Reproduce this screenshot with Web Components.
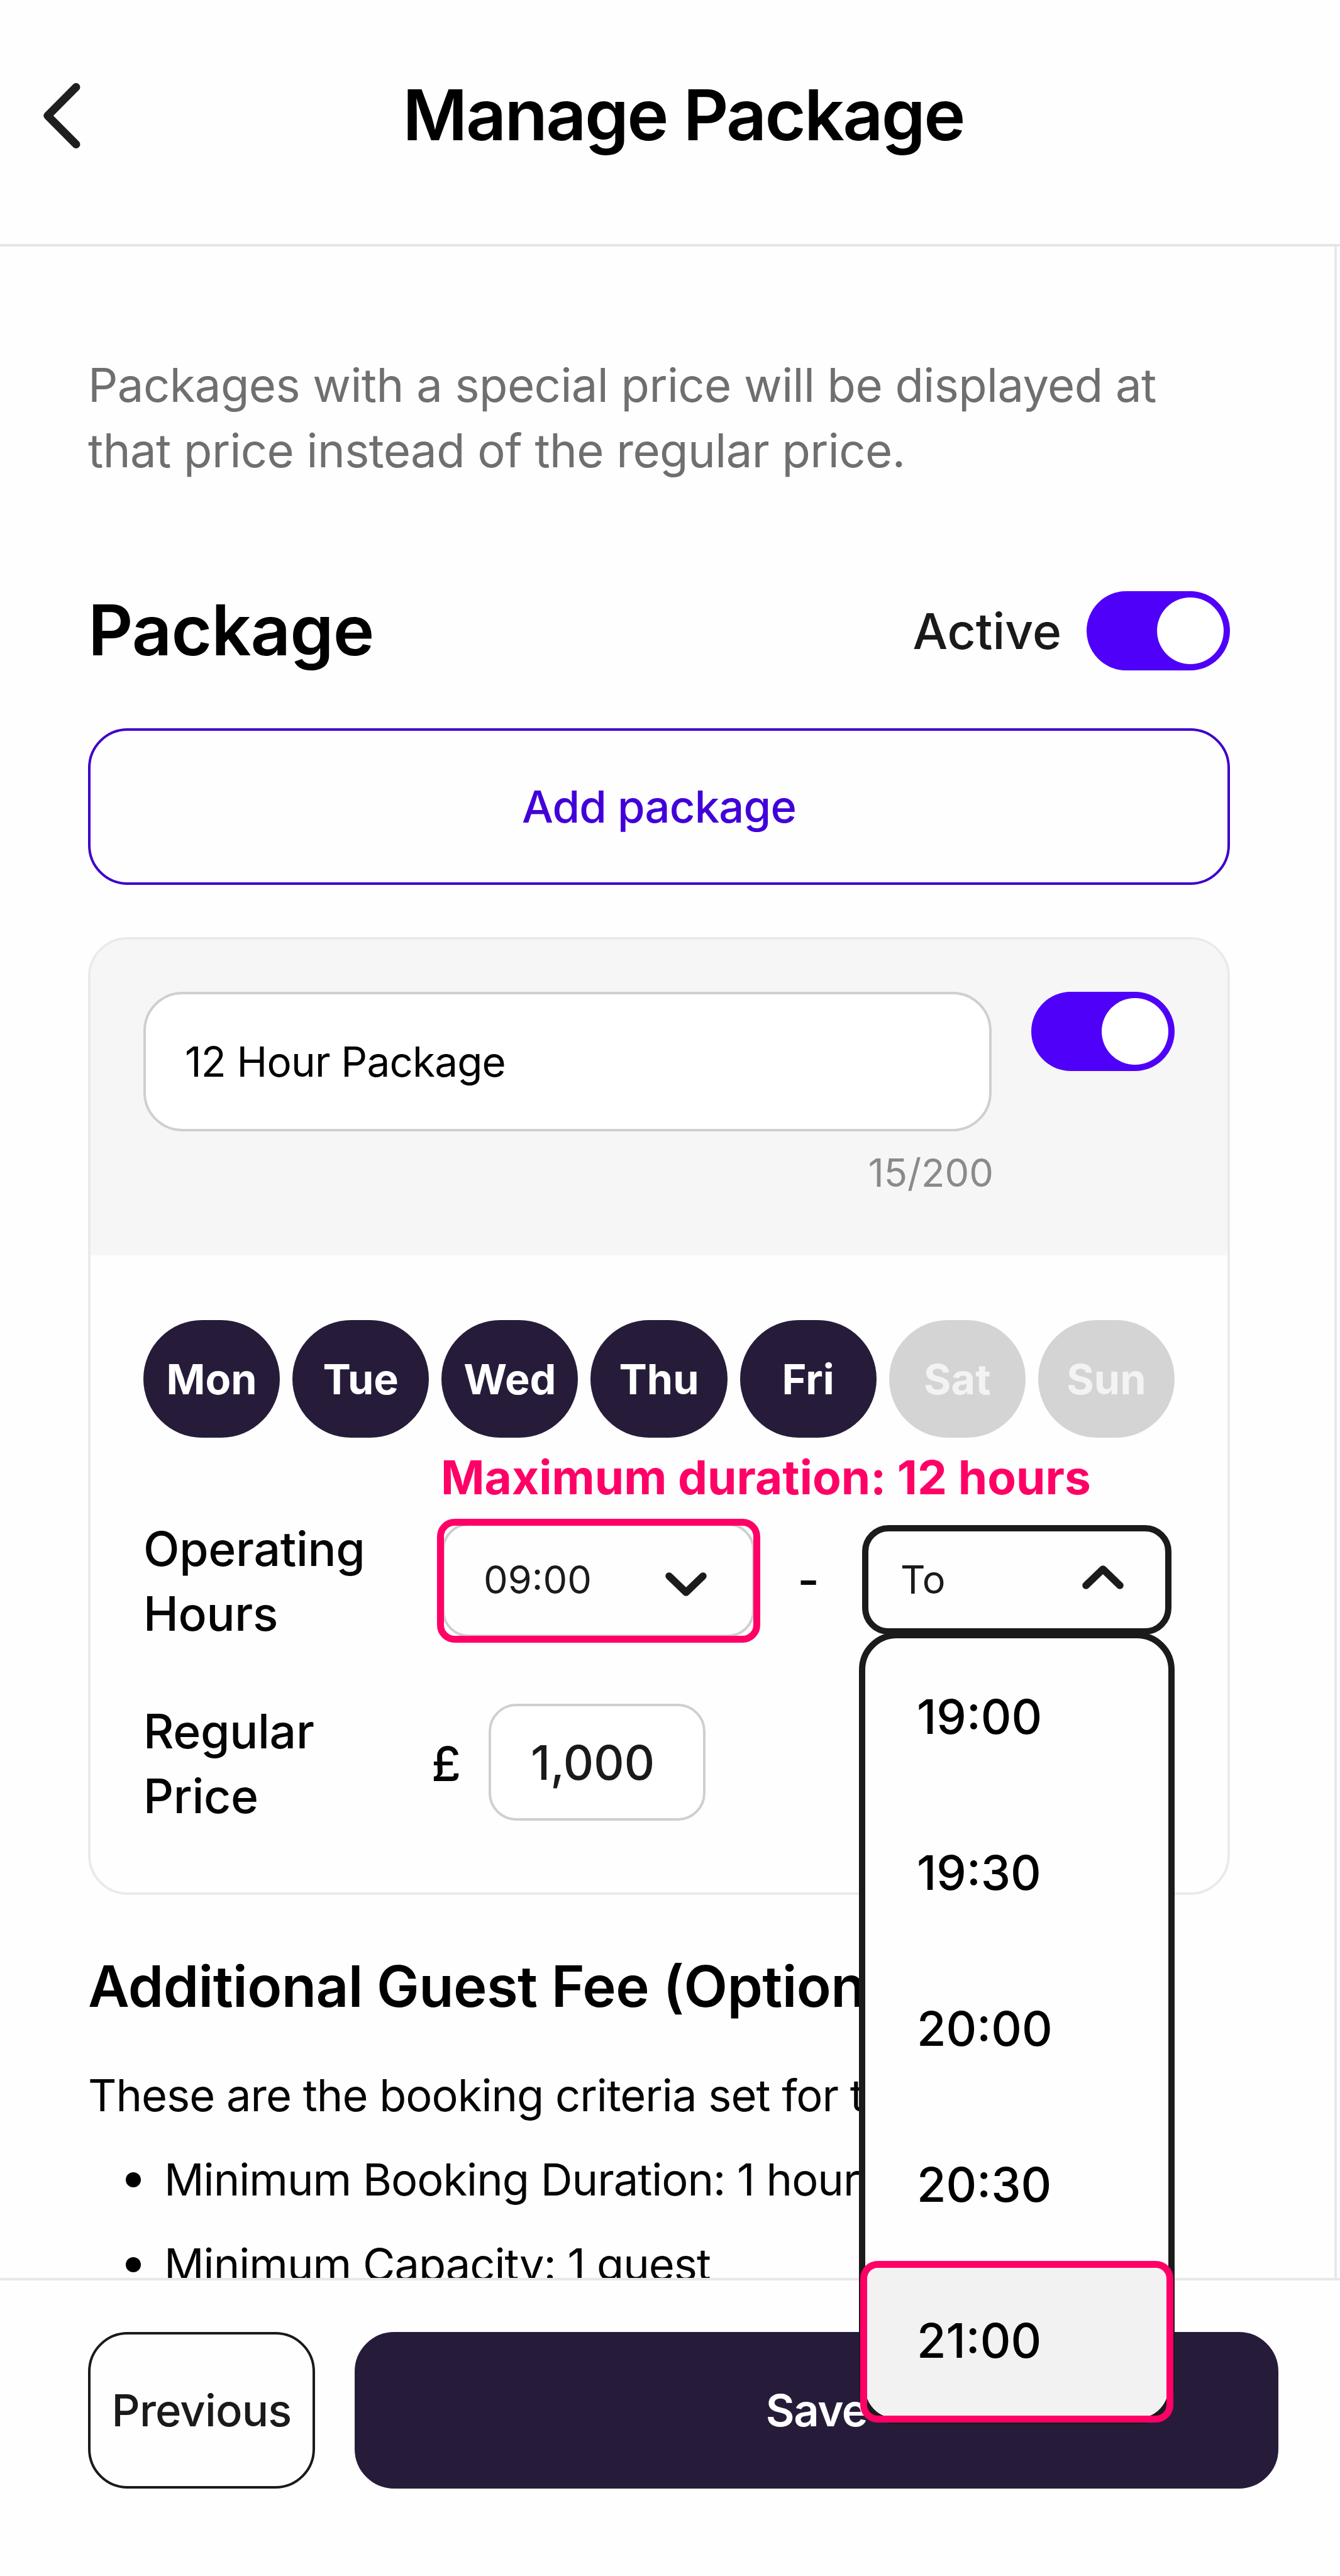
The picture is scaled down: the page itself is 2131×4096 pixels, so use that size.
<!DOCTYPE html>
<html lang="en">
<head>
<meta charset="utf-8">
<title>Manage Package</title>
<style>
  html, body {
    margin: 0;
    padding: 0;
    width: 2131px;
    height: 4096px;
    overflow: hidden;
    background: #fefefe;
    font-family: Inter, "Liberation Sans", sans-serif;
    color: #050505;
  }
</style>
</head>
<body>
<package-page></package-page>

<script>
class PageHeader extends HTMLElement {
  constructor() {
    super();
    this.attachShadow({ mode: "open" });
    this.shadowRoot.innerHTML = `
      <style>
        :host {
          display: flex;
          align-items: center;
          box-sizing: border-box;
          height: 392px;
          padding: 0 0 21px 64px;
          border-bottom: 4px solid #e5e5e5;
        }
        svg { flex: none; display: block; }
        h1 {
          flex: 1;
          margin: -4px 0 0;
          padding-right: 92px;
          text-align: center;
          font-size: 112px;
          line-height: 130px;
          font-weight: 600;
          letter-spacing: -2.7px;
          color: #000;
        }
      </style>
      <svg width="70" height="112" viewBox="0 0 70 112" fill="none" stroke="#1f1f1f" stroke-width="13" stroke-linecap="round" stroke-linejoin="round">
        <path d="M57 10.500 L11.800 56 L57 101.500"/>
      </svg>
      <h1><slot></slot></h1>
    `;
  }
}

class ToggleSwitch extends HTMLElement {
  constructor() {
    super();
    this.attachShadow({ mode: "open" });
    this.shadowRoot.innerHTML = `
      <style>
        :host {
          display: flex;
          justify-content: flex-end;
          flex: none;
          box-sizing: border-box;
          width: 228px;
          height: 126px;
          padding: 10px;
          border-radius: 63px;
          background: #4f00f8;
        }
        i {
          width: 106px;
          height: 106px;
          border-radius: 50%;
          background: #fff;
        }
      </style>
      <i></i>
    `;
  }
}

class AppButton extends HTMLElement {
  constructor() {
    super();
    this.attachShadow({ mode: "open" });
    this.shadowRoot.innerHTML = `
      <style>
        :host {
          display: flex;
          align-items: center;
          justify-content: center;
          box-sizing: border-box;
          height: 249px;
          border: 4px solid #1a1a1a;
          border-radius: 63px;
          font-size: 70.5px;
          font-weight: 500;
          letter-spacing: -0.8px;
          color: #1a1a1a;
          white-space: nowrap;
        }
        :host([variant="accent"]) {
          border-color: #3d00cc;
          color: #4200d9;
        }
        :host([variant="primary"]) {
          border-color: #261c3a;
          background: #261c3a;
          color: #fff;
          font-weight: 600;
          letter-spacing: -1.4px;
        }
      </style>
      <slot></slot>
    `;
  }
}

class TextField extends HTMLElement {
  constructor() {
    super();
    this.attachShadow({ mode: "open" });
    this.shadowRoot.innerHTML = `
      <style>
        :host {
          display: flex;
          align-items: center;
          box-sizing: border-box;
          border: 4px solid #cfcfcf;
          background: #fff;
        }
      </style>
      <slot></slot>
    `;
  }
}

class DayPill extends HTMLElement {
  constructor() {
    super();
    this.attachShadow({ mode: "open" });
    this.shadowRoot.innerHTML = `
      <style>
        :host {
          display: flex;
          align-items: center;
          justify-content: center;
          flex: 1;
          height: 187px;
          border-radius: 94px;
          background: #261c3a;
          color: #fff;
          font-size: 66.5px;
          font-weight: 700;
        }
        :host([off]) {
          background: #d4d4d4;
          color: #f3f3f3;
        }
      </style>
      <slot></slot>
    `;
  }
}

class FormRow extends HTMLElement {
  constructor() {
    super();
    this.attachShadow({ mode: "open" });
    this.shadowRoot.innerHTML = `
      <style>
        :host {
          display: flex;
          align-items: center;
          position: relative;
          height: 206px;
          font-size: 75px;
          line-height: 103px;
          font-weight: 500;
        }
        .label {
          flex: none;
          width: var(--label-width, 475px);
          letter-spacing: -0.3px;
        }
      </style>
      <div class="label"><slot name="label"></slot></div>
      <slot></slot>
    `;
  }
}

class TimeSelect extends HTMLElement {
  constructor() {
    super();
    this.attachShadow({ mode: "open" });
    this.shadowRoot.innerHTML = `
      <style>
        :host {
          display: flex;
          align-items: center;
          justify-content: space-between;
          position: relative;
          flex: none;
          box-sizing: border-box;
          width: 497px;
          height: 181px;
          margin-bottom: 3px;
          padding: 0 72px 0 62px;
          border: 4px solid #cfcfcf;
          border-radius: 42px;
          font-size: 61.4px;
          font-weight: 400;
          color: #1b1b1b;
        }
        :host([open]) {
          width: 492px;
          height: 174px;
          margin-bottom: 4px;
          border: 10px solid #1b1b1b;
          padding: 0 66px 0 51px;
        }
        svg { display: block; margin-top: 13px; }
        :host([open]) svg { transform: scaleY(-1); margin-top: -9px; }
      </style>
      <span>${this.getAttribute("value")}</span>
      <svg width="66" height="38" viewBox="0 0 66 38" fill="none" stroke="#1b1b1b" stroke-width="11.500" stroke-linecap="round" stroke-linejoin="round">
        <path d="M6 6 L33 32 L60 6"/>
      </svg>
      <slot></slot>
    `;
  }
}

class TimeMenu extends HTMLElement {
  constructor() {
    super();
    this.attachShadow({ mode: "open" });
    const items = this.getAttribute("times").split(",");
    this.shadowRoot.innerHTML = `
      <style>
        :host {
          position: absolute;
          z-index: 5;
          left: -15px;
          top: 160px;
          box-sizing: border-box;
          width: 502px;
          border: 10.500px solid #1b1b1b;
          border-radius: 60px;
          background: #fefefe;
          font-size: 75.5px;
          font-weight: 500;
          color: #000;
        }
        div {
          display: flex;
          align-items: center;
          position: relative;
          height: 248px;
          padding-left: 82px;
        }
        div:last-of-type {
          background: #f2f2f2;
          border-radius: 0 0 48px 48px;
        }
      </style>
      ${items.map((t, i) => `<div>${t}${i === items.length - 1 ? "<slot></slot>" : ""}</div>`).join("")}
    `;
  }
}

// Pink outline drawn over a control
class HighlightBox extends HTMLElement {
  constructor() {
    super();
    this.attachShadow({ mode: "open" });
    this.shadowRoot.innerHTML = `
      <style>
        :host {
          display: block;
          position: absolute;
          z-index: 6;
          box-sizing: border-box;
          border: 11px solid #ff0066;
          border-radius: 28px;
        }
      </style>
    `;
  }
}

class PackageCard extends HTMLElement {
  constructor() {
    super();
    this.attachShadow({ mode: "open" });
    this.shadowRoot.innerHTML = `
      <style>
        :host {
          display: block;
          box-sizing: border-box;
          height: 1523px;
          border: 4px solid #eaeaea;
          border-radius: 63px;
        }
        .top {
          display: flex;
          justify-content: space-between;
          align-items: flex-start;
          box-sizing: border-box;
          height: 502px;
          padding: 83px 84px 0;
          border-radius: 58px 58px 0 0;
          background: #f6f6f6;
        }
        .name {
          width: 1349px;
        }
        .name text-field {
          height: 222px;
          padding-left: 62px;
          border-radius: 62px;
          font-size: 65.5px;
          letter-spacing: -0.8px;
          color: #000;
        }
        .count {
          margin: 23px -3px 0 0;
          text-align: right;
          font-size: 61.4px;
          line-height: 86px;
          color: #8a8a8a;
        }
        .body {
          padding: 103px 84px 0;
        }
        .days {
          display: flex;
          gap: 20px;
          margin-bottom: 125px;
        }
        .dash {
          width: 171px;
          margin-bottom: 4px;
          text-align: center;
        }
        .note {
          position: absolute;
          z-index: 6;
          left: 473px;
          top: -112px;
          line-height: 100px;
          font-size: 74.7px;
          font-weight: 700;
          color: #ff0066;
          white-space: nowrap;
        }
        .from-mark {
          left: 467px;
          top: 4px;
          width: 514px;
          height: 197px;
        }
        .to-mark {
          left: -8px;
          right: -8px;
          top: -2px;
          bottom: -7px;
        }
        .price {
          --label-width: 458px;
          margin-top: 84px;
        }
        .currency {
          width: 91px;
          font-size: 76px;
        }
        .price text-field {
          width: 345px;
          height: 186px;
          margin-bottom: 4px;
          padding-left: 63px;
          border-radius: 44px;
          font-size: 75px;
          color: #1a1a1a;
        }
      </style>
      <div class="top">
        <div class="name">
          <text-field>12 Hour Package</text-field>
          <div class="count">15/200</div>
        </div>
        <toggle-switch></toggle-switch>
      </div>
      <div class="body">
        <div class="days">
          <day-pill>Mon</day-pill>
          <day-pill>Tue</day-pill>
          <day-pill>Wed</day-pill>
          <day-pill>Thu</day-pill>
          <day-pill>Fri</day-pill>
          <day-pill off>Sat</day-pill>
          <day-pill off>Sun</day-pill>
        </div>
        <form-row>
          <span slot="label">Operating<br>Hours</span>
          <time-select value="09:00"></time-select>
          <span class="dash">-</span>
          <time-select value="To" open>
            <time-menu times="19:00,19:30,20:00,20:30,21:00">
              <highlight-box class="to-mark"></highlight-box>
            </time-menu>
          </time-select>
          <span class="note">Maximum duration: 12 hours</span>
          <highlight-box class="from-mark"></highlight-box>
        </form-row>
        <form-row class="price">
          <span slot="label">Regular<br>Price</span>
          <span class="currency">£</span>
          <text-field>1,000</text-field>
        </form-row>
      </div>
    `;
  }
}

class GuestFee extends HTMLElement {
  constructor() {
    super();
    this.attachShadow({ mode: "open" });
    this.shadowRoot.innerHTML = `
      <style>
        :host {
          display: block;
          font-size: 70.4px;
          line-height: 103px;
          letter-spacing: -1px;
          white-space: nowrap;
        }
        h3 {
          margin: 0 0 62px;
          font-size: 90.5px;
          line-height: 120px;
          font-weight: 600;
          letter-spacing: -0.6px;
          color: #000;
        }
        p { margin: 0 0 31px; }
        ul {
          display: flex;
          flex-direction: column;
          gap: 32px;
          margin: 0;
          padding: 0 0 0 60px;
          list-style: none;
        }
        li {
          display: flex;
          align-items: center;
          gap: 37px;
        }
        li::before {
          content: "";
          width: 24px;
          height: 24px;
          border-radius: 50%;
          background: #000;
        }
      </style>
      <h3>Additional Guest Fee (Optional)</h3>
      <p>These are the booking criteria set for this</p>
      <ul>
        <li>Minimum Booking Duration: 1 hour</li>
        <li>Minimum Capacity: 1 guest</li>
      </ul>
    `;
  }
}

class PackagePage extends HTMLElement {
  constructor() {
    super();
    this.attachShadow({ mode: "open" });
    this.shadowRoot.innerHTML = `
      <style>
        :host {
          display: flex;
          flex-direction: column;
          height: 4096px;
        }
        main {
          box-sizing: border-box;
          height: 3230px;
          margin-right: 5px;
          padding: 169px 166px 0 140px;
          border-right: 4px solid #e8e8e8;
        }
        .intro {
          margin: 0 0 172px;
          font-size: 74.2px;
          line-height: 103.7px;
          letter-spacing: -0.58px;
          color: #6f6f6f;
        }
        .head {
          display: flex;
          align-items: center;
          margin-bottom: 92px;
        }
        h2 {
          flex: 1;
          margin: -3px 0 0;
          font-size: 111px;
          line-height: 126px;
          font-weight: 600;
          letter-spacing: -0.95px;
          color: #000;
        }
        .state {
          margin-right: 40px;
          font-size: 78.5px;
          font-weight: 500;
          color: #1a1a1a;
        }
        package-card { margin: 83px 0 85px; }
        /* opaque, so the scrolled content disappears behind it */
        footer {
          display: flex;
          gap: 63px;
          position: relative;
          z-index: 1;
          box-sizing: border-box;
          height: 474px;
          padding: 82px 98px 0 140px;
          border-top: 4px solid #e8e8e8;
          background: #fefefe;
        }
        .prev { width: 361px; }
        .save { flex: 1; }
      </style>
      <page-header>Manage Package</page-header>
      <main>
        <p class="intro">Packages with a special price will be displayed at<br>that price instead of the regular price.</p>
        <div class="head">
          <h2>Package</h2>
          <span class="state">Active</span>
          <toggle-switch></toggle-switch>
        </div>
        <app-button variant="accent">Add package</app-button>
        <package-card></package-card>
        <guest-fee></guest-fee>
      </main>
      <footer>
        <app-button class="prev">Previous</app-button>
        <app-button class="save" variant="primary">Save</app-button>
      </footer>
    `;
  }
}

customElements.define("page-header", PageHeader);
customElements.define("toggle-switch", ToggleSwitch);
customElements.define("app-button", AppButton);
customElements.define("text-field", TextField);
customElements.define("day-pill", DayPill);
customElements.define("form-row", FormRow);
customElements.define("time-select", TimeSelect);
customElements.define("time-menu", TimeMenu);
customElements.define("highlight-box", HighlightBox);
customElements.define("package-card", PackageCard);
customElements.define("guest-fee", GuestFee);
customElements.define("package-page", PackagePage);
</script>
</body>
</html>
